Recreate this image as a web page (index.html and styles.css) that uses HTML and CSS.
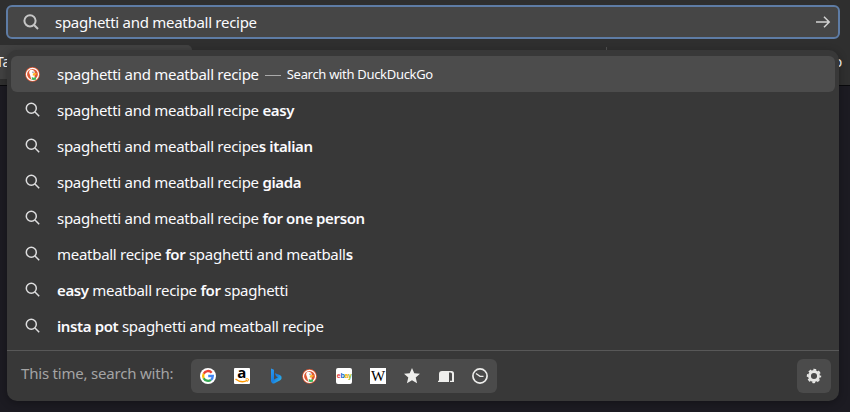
FILE: index.html
```
<!DOCTYPE html>
<html lang="en">
<head>
<meta charset="utf-8">
<title>Address bar</title>
<link rel="stylesheet" href="styles.css">
</head>
<body>
<svg class="defs" width="0" height="0">
  <defs>
    <symbol id="search" viewBox="0 0 16 16"><circle cx="6.3" cy="6.3" r="5" fill="none" stroke="currentColor" stroke-width="1.5"/><path d="M10 10l4.2 4.2" stroke="currentColor" stroke-width="1.5"/></symbol>
    <linearGradient id="bingfill" x1="0" y1="0" x2="1" y2="1"><stop offset="0" stop-color="#2d9cf0"/><stop offset=".5" stop-color="#187de0"/><stop offset="1" stop-color="#35c9ee"/></linearGradient>
    <symbol id="duck" viewBox="0 0 16 16"><circle cx="7.5" cy="8.3" r="7.4" fill="#de5833"/><circle cx="7.5" cy="8.3" r="6" fill="none" stroke="#fff" stroke-width="1.2"/><path d="M4.4 4.8Q5.7 3.2 8 4Q10 5 9.8 7.4L9.5 9.8L10 13.3Q8.3 14.2 6.2 13.3L5 9Q3.6 6.5 4.4 4.8z" fill="#fff"/><path d="M7.8 7.6Q10 6.6 12 7.6Q11.2 9.6 7.8 9.8z" fill="#fdb027"/><path d="M6.8 11l1.8.8 2.4-.8v2.8l-2.6.2-1.6-.6z" fill="#3fb65c"/><circle cx="8" cy="6.2" r=".6" fill="#456"/></symbol>
  </defs>
</svg>
<header class="toolbar">
  <div class="urlbar">
    <svg class="glass" viewBox="0 0 16 16"><circle cx="7" cy="6.8" r="5.6" fill="none" stroke="currentColor" stroke-width="2"/><path d="M10.8 10.8l4.2 4.2" stroke="currentColor" stroke-width="2"/></svg>
    <span class="query">spaghetti and meatball recipe</span>
    <svg class="go" viewBox="0 0 16 16"><path d="M1 8h13M9 2.8L14.2 8 9 13.2" fill="none" stroke="currentColor" stroke-width="1.5"/></svg>
  </div>
  <div class="tabs"><div class="tab">Ta</div><i class="divider"></i><span class="tail">o</span></div>
</header>
<main class="panel">
  <ul class="results">
    <li class="selected"><svg><use href="#duck"/></svg><span>spaghetti and meatball recipe</span><i class="dash"></i><small>Search with DuckDuckGo</small></li>
    <li><svg><use href="#search"/></svg><span>spaghetti and meatball recipe <b>easy</b></span></li>
    <li><svg><use href="#search"/></svg><span>spaghetti and meatball recipe<b>s italian</b></span></li>
    <li><svg><use href="#search"/></svg><span>spaghetti and meatball recipe <b>giada</b></span></li>
    <li><svg><use href="#search"/></svg><span>spaghetti and meatball recipe <b>for one person</b></span></li>
    <li><svg><use href="#search"/></svg><span>meatball recipe <b>for</b> spaghetti and meatball<b>s</b></span></li>
    <li><svg><use href="#search"/></svg><span><b>easy</b> meatball recipe <b>for</b> spaghetti</span></li>
    <li><svg><use href="#search"/></svg><span><b>insta pot</b> spaghetti and meatball recipe</span></li>
  </ul>
  <footer class="engines">
    <span class="label">This time, search with:</span>
    <div class="group">
      <svg viewBox="0 0 16 16"><circle cx="8" cy="8" r="8" fill="#fff"/><g fill="none" stroke-width="2.3"><path d="M3.7 5.8A4.8 4.8 0 0 1 11.7 4.7" stroke="#ea4335"/><path d="M3.7 5.8A4.8 4.8 0 0 0 3.7 10.2" stroke="#fbbc05"/><path d="M3.7 10.2A4.8 4.8 0 0 0 11 11.8" stroke="#34a853"/><path d="M11 11.8Q12.8 10.4 12.8 8H8.2" stroke="#4285f4"/></g></svg>
      <svg viewBox="0 0 16 16"><rect width="16" height="16" rx="1" fill="#fff"/><text x="7.8" y="10" class="amazon">a</text><path d="M1.5 11Q7.5 15.7 13.3 12.4" fill="none" stroke="#f90" stroke-width="1.5"/><path d="M11.5 11q3-.8 3 .1t-1 2.5" fill="none" stroke="#f90"/></svg>
      <svg viewBox="0 0 16 16"><path d="M3 .5l3 1.2v9.8l4-2.3-1.9-1L6.9 5.3l5 1.8q2 1 1.7 3-.1 1.4-1.4 2.2L6.1 15.5Q3.2 15.6 3 12.7z" fill="url(#bingfill)"/></svg>
      <svg><use href="#duck"/></svg>
      <svg viewBox="0 0 16 16"><rect width="16" height="16" rx="2" fill="#fff"/><text x="0.8" y="10" class="ebay"><tspan fill="#e53238">e</tspan><tspan fill="#0064d2">b</tspan><tspan fill="#f5af02">a</tspan><tspan fill="#86b817">y</tspan></text></svg>
      <svg viewBox="0 0 16 16"><rect width="16" height="16" fill="#fff"/><text x="8" y="13" class="wiki">W</text></svg>
      <svg viewBox="0 0 16 16"><path d="M8 0l2.3 5.3 5.7.5-4.3 3.7 1.4 5.8L8 12.2l-5.1 3.1 1.4-5.8L0 5.8l5.7-.5z" fill="currentColor"/></svg>
      <svg viewBox="0 0 16 16"><path d="M0 14v-1.2h1V6Q1 3 4 3h7v11zM10 3h3.5Q16 3 16 5.5V14h-4v-1.3h2V6Q14 4.5 12.5 4.5H10z" fill="currentColor"/></svg>
      <svg viewBox="0 0 16 16"><g fill="none" stroke="currentColor" stroke-width="1.7"><circle cx="8" cy="8" r="7.1"/><path d="M4 5.5L8 8.3h3.5" stroke-width="1.3"/></g></svg>
    </div>
    <div class="settings"><svg viewBox="0 0 16 16"><g fill="none" stroke="currentColor"><circle cx="8" cy="8" r="4.5" stroke-width="2.9"/><circle cx="8" cy="8" r="6.3" stroke-width="1.8" stroke-dasharray="2.8 2.148" stroke-dashoffset="1.4"/></g></svg></div>
  </footer>
</main>
</body>
</html>
```
FILE: styles.css
```
* { box-sizing: border-box; }
body { margin: 0; width: 850px; height: 412px; overflow: hidden; position: relative; background: #1c1b22; color: #fbfbfe; font: 15px/20px "Noto Sans", sans-serif; letter-spacing: -.28px; }
svg { display: block; flex: none; width: 16px; height: 16px; }
.defs { position: absolute; width: 0; height: 0; }
.toolbar { height: 86px; padding: 5px 10px 0 6px; background: #2f2f2f; border-bottom: 1px solid #09090c; }
.urlbar { height: 34px; border: 2px solid #5e7ca5; border-radius: 6px; background: #464646; display: flex; align-items: center; padding: 0 7px 0 15px; }
.urlbar .glass { color: #c6c6c6; margin-right: 16px; }
.query { flex: 1; }
.go { color: #d2d2d2; }
.tabs { display: flex; height: 34px; margin: 6px -10px 0 -6px; }
.tab { width: 192px; background: #424242; border-radius: 0 5px 0 0; padding-top: 7px; text-indent: -4px; font-size: 14px; }
.divider { width: 1px; height: 25px; margin: 2px 0 0 414px; background: #505050; }
.tail { margin: 7px 8px 0 auto; font-size: 14px; }
.panel { position: absolute; left: 7px; top: 50px; width: 832px; height: 351px; padding-top: 6px; background: #383838; border-radius: 10px; box-shadow: 0 2px 8px rgba(0,0,0,.3); }
.results { list-style: none; margin: 0 4px; padding: 0; }
.results li { height: 36px; display: flex; align-items: center; padding-left: 14px; border-radius: 6px; white-space: pre; }
.results li > svg { margin-right: 16px; color: #dededf; }
.results .selected { background: #4c4c4c; }
.results b { font-weight: 600; letter-spacing: -.38px; }
.dash { width: 16px; height: 1px; background: #aaa; margin: 3px 6px 0 6px; }
small { font-size: 13px; letter-spacing: -.31px; }
.engines { height: 51px; margin-top: 6px; padding: 0 8px 0 14px; border-top: 1px solid #585858; display: flex; align-items: center; }
.label { width: 170px; color: #a4a4a4; padding-bottom: 6px; white-space: nowrap; letter-spacing: -.2px; }
.group { width: 306px; height: 34px; padding: 0 9px; border-radius: 6px; background: #4b4b4b; display: flex; align-items: center; justify-content: space-between; color: #eeeeec; }
.settings { width: 34px; height: 34px; border-radius: 6px; background: #4b4b4b; margin-left: auto; display: grid; place-items: center; color: #e6e6e4; }
.amazon { font: bold 15px "Open Sans", sans-serif; text-anchor: middle; letter-spacing: 0; }
.ebay { font: bold 7px "Liberation Sans", sans-serif; letter-spacing: -.3px; }
.wiki { font: 15px "Liberation Serif", serif; text-anchor: middle; letter-spacing: 0; }
```
